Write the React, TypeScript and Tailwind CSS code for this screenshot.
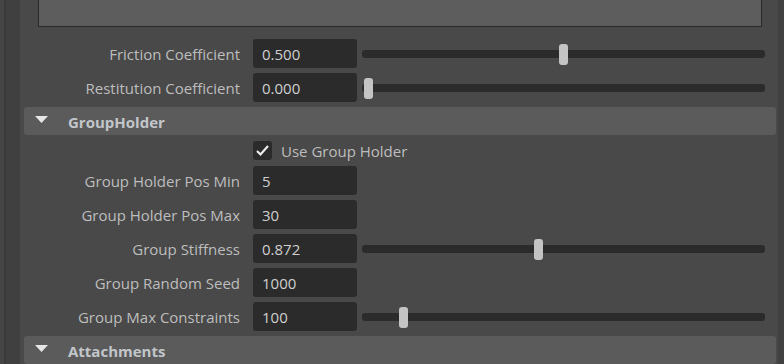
import React from "react";

type Row = {
  label: string;
  value: string;
  slider?: number; // thumb offset in px from track start
};

const physicsRows: Row[] = [
  { label: "Friction Coefficient", value: "0.500", slider: 197 },
  { label: "Restitution Coefficient", value: "0.000", slider: 2 },
];

const groupRows: Row[] = [
  { label: "Group Holder Pos Min", value: "5" },
  { label: "Group Holder Pos Max", value: "30" },
  { label: "Group Stiffness", value: "0.872", slider: 172 },
  { label: "Group Random Seed", value: "1000" },
  { label: "Group Max Constraints", value: "100", slider: 37 },
];

const AttrRow = ({ row }: { row: Row }) => (
  <div className="flex items-center h-[29px]">
    <div className="w-[221px] text-right text-[15px] text-[#bdbdbd] pr-px pt-[2px] whitespace-nowrap">
      {row.label}
    </div>
    <div className="ml-[12px] w-[104px] h-[29px] rounded-[3px] bg-[#2b2b2b] flex items-center pl-[9px] pt-[2px] text-[15px] text-[#cfcfcf]">
      {row.value}
    </div>
    {row.slider !== undefined && (
      <div className="relative ml-[5px] w-[403px] h-[8px] rounded-[3px] bg-[#2b2b2b]">
        <div
          className="absolute top-[-6px] w-[9px] h-[21px] rounded-[3px] bg-[#c4c4c4]"
          style={{ left: row.slider }}
        />
      </div>
    )}
  </div>
);

const SectionHeader = ({ title }: { title: string }) => (
  <div className="ml-[4px] mr-[2px] h-[28px] rounded-[3px] bg-[#5b5b5b] flex items-center">
    <svg width="13" height="7" viewBox="0 0 13 7" className="ml-[11px] mb-[3px]">
      <polygon points="0,0 13,0 6.5,7" fill="#e6e6e6" />
    </svg>
    <span className="ml-[20px] pt-[2px] text-[15px] font-bold text-[#c2c6ca]">
      {title}
    </span>
  </div>
);

export default function App() {
  return (
    <div
      className="w-[784px] h-[364px] overflow-hidden flex bg-[#494949]"
      style={{ fontFamily: '"Open Sans", "Noto Sans", sans-serif' }}
    >
      {/* left gutter */}
      <div className="w-[4px] bg-[#454545]" />
      <div className="w-[2px] bg-[#3a3a3a]" />
      <div className="w-[14px] bg-[#404040]" />

      <div className="flex-1 flex flex-col">
        {/* preview box cut off at top */}
        <div className="ml-[18px] mr-[16px] h-[27px] bg-[#5d5d5d] border-l border-r border-b border-[#2a2a2a]" />

        <div className="mt-[12px] flex flex-col gap-[5px]">
          {physicsRows.map((r) => (
            <AttrRow key={r.label} row={r} />
          ))}
        </div>

        <div className="mt-[5px]">
          <SectionHeader title="GroupHolder" />
        </div>

        <div className="mt-[6px] flex items-center h-[19px] pl-[233px]">
          <div className="w-[19px] h-[19px] rounded-[3px] bg-[#2b2b2b] flex items-center justify-center">
            <svg width="15" height="13" viewBox="0 0 15 13">
              <polyline
                points="2,7 5.5,10.5 13,2"
                fill="none"
                stroke="#ececec"
                strokeWidth="2.2"
              />
            </svg>
          </div>
          <span className="ml-[9px] pt-[1px] text-[15px] text-[#bdbdbd]">Use Group Holder</span>
        </div>

        <div className="mt-[6px] flex flex-col gap-[5px]">
          {groupRows.map((r) => (
            <AttrRow key={r.label} row={r} />
          ))}
        </div>

        <div className="mt-[5px]">
          <SectionHeader title="Attachments" />
        </div>
      </div>

      {/* right gutter */}
      <div className="w-[6px] bg-[#414141]" />
    </div>
  );
}
